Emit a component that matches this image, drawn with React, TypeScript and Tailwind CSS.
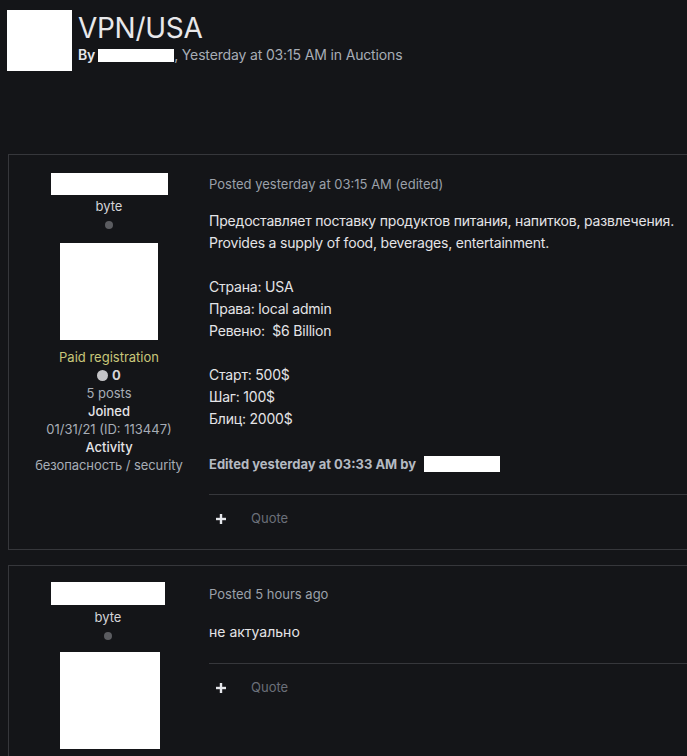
import React from "react";

const font = { fontFamily: "Inter, 'Noto Sans', sans-serif" };

function Plus() {
  return (
    <svg width="10" height="10" viewBox="0 0 10 10" className="block">
      <rect x="3.8" y="0" width="2.4" height="10" fill="#e5e7eb" />
      <rect x="0" y="3.8" width="10" height="2.4" fill="#e5e7eb" />
    </svg>
  );
}

function ActionBar() {
  return (
    <div className="flex items-center h-[24px] pl-[7px]">
      <Plus />
      <span className="ml-[25px] text-[13px] text-[#6b7079]">Quote</span>
    </div>
  );
}

export default function App() {
  return (
    <div className="w-[687px] h-[756px] overflow-hidden bg-[#141518] text-[#e4e4e7]" style={font}>
      {/* Header */}
      <div className="flex pt-[10px] pl-[7px]">
        <div className="w-[65px] h-[61px] bg-white" />
        <div className="ml-[6px]">
          <div className="text-[28px] leading-[34px] text-[#e8e8ea] tracking-[-0.3px] mt-[1px]">VPN/USA</div>
          <div className="flex items-center text-[14px] leading-[18px] mt-[1px] tracking-[-0.15px]">
            <span className="font-semibold text-[#e5e7eb]">By</span>
            <span className="inline-block w-[76px] h-[13px] bg-white ml-[3px]" />
            <span className="text-[#a7adb6]">, Yesterday at 03:15 AM in Auctions</span>
          </div>
        </div>
      </div>

      {/* Post 1 */}
      <div className="mt-[83px] ml-[8px] w-[720px] h-[396px] border border-[#36373b] flex">
        <div className="w-[200px] flex flex-col items-center pt-[18px] text-[13px] leading-[18px]">
          <div className="w-[117px] h-[22px] bg-white" />
          <div className="mt-[2px] text-[#d4d4d8]">byte</div>
          <div className="mt-[6px] w-[8px] h-[8px] rounded-full bg-[#5b5c60]" />
          <div className="mt-[14px] w-[98px] h-[97px] bg-white" />
          <div className="mt-[8px] text-[#c9c77a]">Paid registration</div>
          <div className="flex items-center gap-[4px] text-[#d4d4d8] font-bold">
            <span className="inline-block w-[11px] h-[11px] rounded-full bg-[#c4c4c7]" />
            <span>0</span>
          </div>
          <div className="text-[#a7adb6]">5 posts</div>
          <div className="text-[#e4e4e7] font-medium">Joined</div>
          <div className="text-[#a7adb6]">01/31/21 (ID: 113447)</div>
          <div className="text-[#e4e4e7] font-medium">Activity</div>
          <div className="text-[#a7adb6] tracking-[-0.1px]">безопасность / security</div>
        </div>
        <div className="flex-1 pt-[20px]">
          <div className="text-[13px] leading-[18px] text-[#9ba1aa]">Posted yesterday at 03:15 AM (edited)</div>
          <div className="mt-[17px] text-[14px] leading-[22px] text-[#e4e4e7] tracking-[-0.2px]">
            <div>Предоставляет поставку продуктов питания, напитков, развлечения.</div>
            <div>Provides a supply of food, beverages, entertainment.</div>
            <div className="h-[22px]" />
            <div>Страна: USA</div>
            <div>Права: local admin</div>
            <div>Ревеню:&nbsp; $6 Billion</div>
            <div className="h-[22px]" />
            <div>Старт: 500$</div>
            <div>Шаг: 100$</div>
            <div>Блиц: 2000$</div>
          </div>
          <div className="mt-[25px] flex items-center text-[13px] leading-[18px] font-bold text-[#b4bac2]">
            <span>Edited yesterday at 03:33 AM by</span>
            <span className="inline-block w-[76px] h-[16px] bg-white ml-[8px]" />
          </div>
          <div className="mt-[21px] border-t border-[#36373b]" />
          <div className="mt-[12px]">
            <ActionBar />
          </div>
        </div>
      </div>

      {/* Post 2 */}
      <div className="mt-[15px] ml-[8px] w-[720px] h-[260px] border border-[#36373b] flex">
        <div className="w-[198px] flex flex-col items-center pt-[16px] text-[13px] leading-[18px]">
          <div className="w-[114px] h-[23px] bg-white" />
          <div className="mt-[3px] text-[#d4d4d8]">byte</div>
          <div className="mt-[6px] w-[8px] h-[8px] rounded-full bg-[#5b5c60]" />
          <div className="mt-[12px] w-[100px] h-[97px] bg-white ml-[4px]" />
        </div>
        <div className="flex-1 pt-[19px] ml-[2px]">
          <div className="text-[13px] leading-[18px] text-[#9ba1aa]">Posted 5 hours ago</div>
          <div className="mt-[18px] text-[14px] leading-[22px] text-[#e4e4e7]">не актуально</div>
          <div className="mt-[20px] border-t border-[#36373b]" />
          <div className="mt-[12px]">
            <ActionBar />
          </div>
        </div>
      </div>
    </div>
  );
}
